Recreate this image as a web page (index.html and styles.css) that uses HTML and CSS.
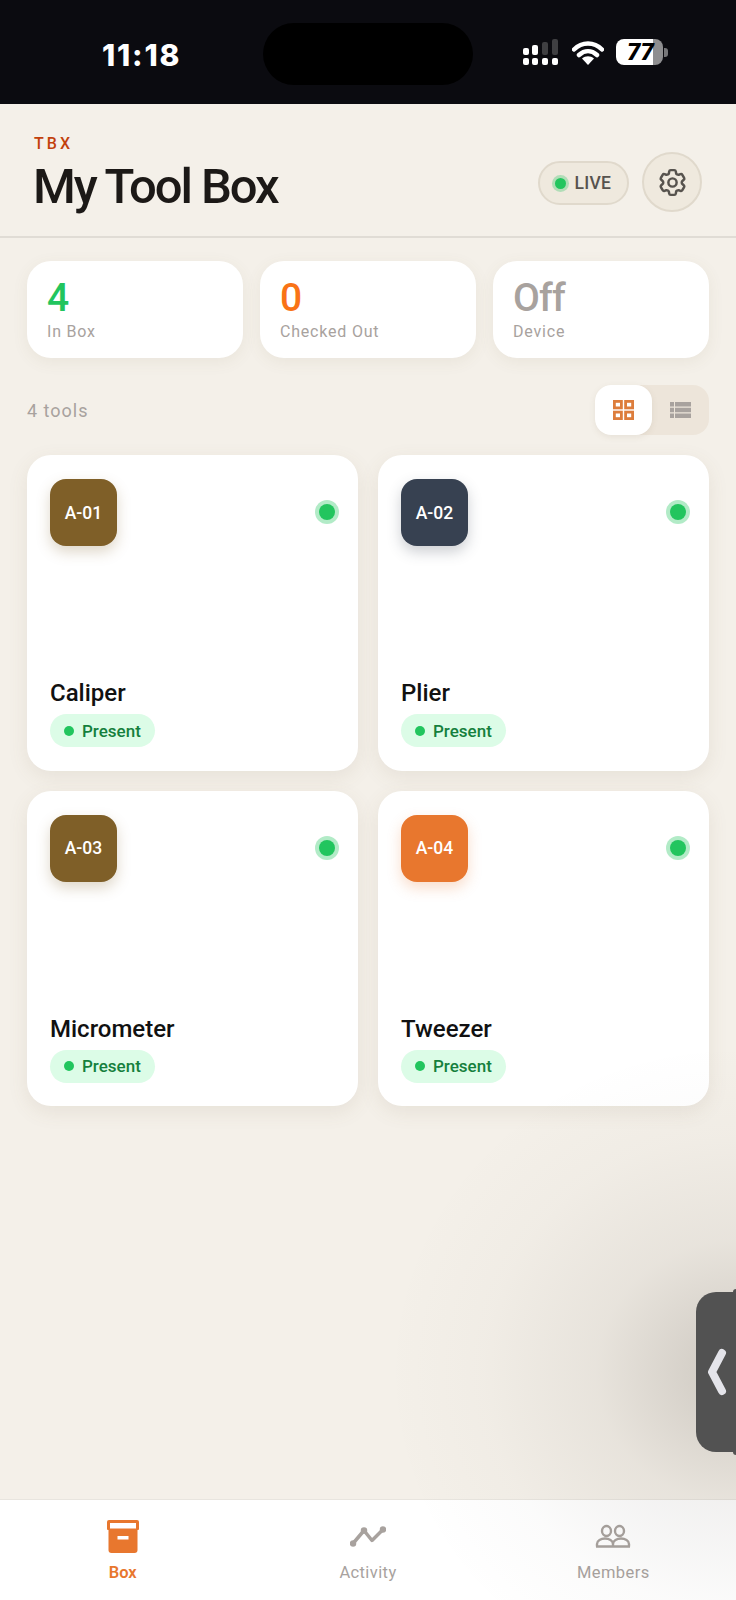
FILE: index.html
```html
<!DOCTYPE html>
<html lang="en">
<head>
    <meta charset="UTF-8">
    <meta name="viewport" content="width=device-width, initial-scale=1.0">
    <title>My Tool Box</title>
    <link rel="stylesheet" href="styles.css">
</head>
<body>
    <div class="phone">
        <div class="status-bar">
            <span class="clock">11:18</span>
            <div class="island"></div>
            <div class="status-icons">
                <svg class="signal" width="38" height="26" viewBox="0 0 38 26">
                    <rect x="1" y="9" width="6" height="7" rx="2" fill="#fff"/>
                    <rect x="10" y="6" width="6" height="10" rx="2" fill="#fff"/>
                    <rect x="20" y="3" width="6" height="13" rx="2" fill="#3f3f42"/>
                    <rect x="30" y="0" width="6" height="16" rx="2" fill="#3f3f42"/>
                    <rect x="1" y="19" width="6" height="7" rx="2" fill="#fff"/>
                    <rect x="10" y="19" width="6" height="7" rx="2" fill="#fff"/>
                    <rect x="20" y="19" width="6" height="7" rx="2" fill="#fff"/>
                    <rect x="30" y="19" width="6" height="7" rx="2" fill="#fff"/>
                </svg>
                <svg class="wifi" width="32" height="25" viewBox="0 0 32 25">
                    <path d="M2 9.500C10 1.500 22 1.500 30 9.500M7 15C12.500 10 19.500 10 25 15" fill="none" stroke="#fff" stroke-width="4.500" stroke-linecap="round"/>
                    <path d="M16 25L10 18.500C13.500 15.500 18.500 15.500 22 18.500Z" fill="#fff"/>
                </svg>
                <div class="battery">
                    <div class="battery-body"><span class="battery-num">77</span></div>
                    <div class="battery-nub"></div>
                </div>
            </div>
        </div>

        <header class="top-header">
            <div>
                <div class="eyebrow">TBX</div>
                <h1>My Tool Box</h1>
            </div>
            <div class="header-actions">
                <div class="live-pill"><span class="live-dot"></span>LIVE</div>
                <div class="gear-btn">
                    <svg width="33" height="33" viewBox="0 0 24 24" fill="none" stroke="#57534e" stroke-width="1.800" stroke-linejoin="round">
                        <path d="M9.594 3.94c.09-.542.56-.94 1.11-.94h2.593c.55 0 1.02.398 1.11.94l.213 1.281c.063.374.313.686.645.87.074.04.147.083.22.127.325.196.72.257 1.075.124l1.217-.456a1.125 1.125 0 0 1 1.37.49l1.296 2.247a1.125 1.125 0 0 1-.26 1.431l-1.003.827c-.293.241-.438.613-.43.992a7.723 7.723 0 0 1 0 .255c-.008.378.137.75.43.991l1.004.827c.424.35.534.955.26 1.43l-1.298 2.247a1.125 1.125 0 0 1-1.369.491l-1.217-.456c-.355-.133-.75-.072-1.076.124a6.47 6.47 0 0 1-.22.128c-.331.183-.581.495-.644.869l-.213 1.281c-.09.543-.56.94-1.11.94h-2.594c-.55 0-1.019-.398-1.11-.94l-.213-1.281c-.062-.374-.312-.686-.644-.87a6.52 6.52 0 0 1-.22-.127c-.325-.196-.72-.257-1.076-.124l-1.217.456a1.125 1.125 0 0 1-1.369-.49l-1.297-2.247a1.125 1.125 0 0 1 .26-1.431l1.004-.827c.292-.24.437-.613.43-.991a6.932 6.932 0 0 1 0-.255c.007-.38-.138-.751-.43-.992l-1.004-.827a1.125 1.125 0 0 1-.26-1.43l1.297-2.247a1.125 1.125 0 0 1 1.37-.491l1.216.456c.356.133.751.072 1.076-.124.072-.044.146-.086.22-.128.332-.183.582-.495.644-.869l.214-1.28Z"/>
                        <circle cx="12" cy="12" r="3"/>
                    </svg>
                </div>
            </div>
        </header>

        <main class="content">
            <div class="stats">
                <div class="stat-card">
                    <div class="stat-value green">4</div>
                    <div class="stat-label">In Box</div>
                </div>
                <div class="stat-card">
                    <div class="stat-value orange">0</div>
                    <div class="stat-label">Checked Out</div>
                </div>
                <div class="stat-card">
                    <div class="stat-value grey">Off</div>
                    <div class="stat-label">Device</div>
                </div>
            </div>

            <div class="toolbar">
                <span class="tool-count">4 tools</span>
                <div class="view-toggle">
                    <div class="toggle-btn active">
                        <svg width="21" height="20" viewBox="0 0 21 20" fill="none" stroke="#dd7d3c" stroke-width="2.800">
                            <rect x="1.400" y="1.400" width="7" height="6.500"/>
                            <rect x="12.600" y="1.400" width="7" height="6.500"/>
                            <rect x="1.400" y="12.100" width="7" height="6.500"/>
                            <rect x="12.600" y="12.100" width="7" height="6.500"/>
                        </svg>
                    </div>
                    <div class="toggle-btn">
                        <svg width="21" height="16" viewBox="0 0 21 16" fill="#a8a29e">
                            <rect x="0" y="0" width="4" height="4.500"/>
                            <rect x="5" y="0" width="16" height="4.500"/>
                            <rect x="0" y="5.750" width="4" height="4.500"/>
                            <rect x="5" y="5.750" width="16" height="4.500"/>
                            <rect x="0" y="11.500" width="4" height="4.500"/>
                            <rect x="5" y="11.500" width="16" height="4.500"/>
                        </svg>
                    </div>
                </div>
            </div>

            <div class="tool-grid">
                <div class="tool-card">
                    <div class="tool-top">
                        <div class="tool-badge brown">A-01</div>
                        <span class="tool-dot"></span>
                    </div>
                    <div class="tool-name">Caliper</div>
                    <div class="present-pill"><span class="pill-dot"></span>Present</div>
                </div>
                <div class="tool-card">
                    <div class="tool-top">
                        <div class="tool-badge slate">A-02</div>
                        <span class="tool-dot"></span>
                    </div>
                    <div class="tool-name">Plier</div>
                    <div class="present-pill"><span class="pill-dot"></span>Present</div>
                </div>
                <div class="tool-card">
                    <div class="tool-top">
                        <div class="tool-badge brown">A-03</div>
                        <span class="tool-dot"></span>
                    </div>
                    <div class="tool-name">Micrometer</div>
                    <div class="present-pill"><span class="pill-dot"></span>Present</div>
                </div>
                <div class="tool-card">
                    <div class="tool-top">
                        <div class="tool-badge amber">A-04</div>
                        <span class="tool-dot"></span>
                    </div>
                    <div class="tool-name">Tweezer</div>
                    <div class="present-pill"><span class="pill-dot"></span>Present</div>
                </div>
            </div>
        </main>

        <nav class="bottom-nav">
            <div class="nav-item active">
                <svg width="32" height="33" viewBox="0 0 32 33">
                    <path d="M2 0H30A2 2 0 0 1 32 2V9A1 1 0 0 1 31 10H1A1 1 0 0 1 0 9V2A2 2 0 0 1 2 0Z" fill="#e8772e"/>
                    <rect x="3" y="3" width="26" height="5.500" fill="#fff"/>
                    <path d="M1.500 10H30.500V30A3 3 0 0 1 27.500 33H4.500A3 3 0 0 1 1.500 30Z" fill="#e8772e"/>
                    <rect x="10.500" y="16" width="11" height="3.500" fill="#fff"/>
                </svg>
                <span>Box</span>
            </div>
            <div class="nav-item">
                <svg width="36" height="33" viewBox="0 0 36 33" fill="none" stroke="#a8a29e" stroke-width="3.500" stroke-linecap="round" stroke-linejoin="round">
                    <path d="M3 23.500L14 10.500L22 20.500L33 9.500"/>
                    <circle cx="3" cy="23.500" r="1.500" fill="#a8a29e"/>
                    <circle cx="14" cy="10.500" r="1.500" fill="#a8a29e"/>
                    <circle cx="33" cy="9.500" r="1.500" fill="#a8a29e"/>
                </svg>
                <span>Activity</span>
            </div>
            <div class="nav-item">
                <svg width="36" height="33" viewBox="0 0 36 33" fill="none" stroke="#a8a29e" stroke-width="2.400">
                    <ellipse cx="11.500" cy="11" rx="4.500" ry="5"/>
                    <ellipse cx="24.500" cy="11" rx="4.500" ry="5"/>
                    <path d="M2 26.500V24C2 20.500 6 18.500 10 18.500C14 18.500 18 20.500 18 24V26.500M18 24C18 20.500 22 18.500 26 18.500C30 18.500 34 20.500 34 24V26.500M1 26.500H35"/>
                </svg>
                <span>Members</span>
            </div>
        </nav>

        <div class="side-glow"></div>
        <div class="side-handle">
            <svg width="20" height="48" viewBox="0 0 20 48" fill="none" stroke="#e4e4ea" stroke-width="8" stroke-linecap="round" stroke-linejoin="round">
                <path d="M15 5L5 24L15 43"/>
            </svg>
        </div>
    </div>
</body>
</html>
```

FILE: styles.css
```css
* {
    box-sizing: border-box;
}
body {
    margin: 0;
    font-family: Roboto, "Liberation Sans", sans-serif;
    background-color: #f4f0e9;
    color: #1c1917;
}
.phone {
    position: relative;
    display: flex;
    flex-direction: column;
    width: 736px;
    height: 1600px;
    overflow: hidden;
    background-color: #f4f0e9;
}

/* Status bar */
.status-bar {
    position: relative;
    display: flex;
    justify-content: space-between;
    align-items: center;
    height: 104px;
    padding: 0 68px 0 102px;
    background-color: #0b0b10;
    flex-shrink: 0;
}
.clock {
    padding-top: 5px;
    color: #fff;
    font-family: Inter, sans-serif;
    font-size: 30px;
    font-weight: 800;
    letter-spacing: 1.800px;
    line-height: 1;
}
.island {
    position: absolute;
    left: 263px;
    top: 23px;
    width: 210px;
    height: 62px;
    border-radius: 31px;
    background-color: #000;
}
.status-icons {
    display: flex;
    align-items: center;
    gap: 12px;
}
.battery {
    display: flex;
    align-items: center;
    gap: 1px;
}
.battery-body {
    display: flex;
    align-items: center;
    justify-content: center;
    width: 47px;
    height: 26px;
    padding-left: 2px;
    border-radius: 8px;
    background: linear-gradient(to right, #fff 78%, #8e8e90 78%);
}
.battery-num {
    color: #000;
    font-size: 24px;
    font-weight: 900;
    font-style: italic;
    line-height: 1;
}
.battery-nub {
    width: 4px;
    height: 9px;
    border-radius: 0 3px 3px 0;
    background-color: #77777a;
}

/* Header */
.top-header {
    display: flex;
    justify-content: space-between;
    height: 134px;
    padding: 32px 34px 0 34px;
    border-bottom: 2px solid #e0dcd5;
    flex-shrink: 0;
}
.eyebrow {
    color: #c2410c;
    font-size: 16px;
    font-weight: 500;
    letter-spacing: 3.1px;
    line-height: 16px;
}
h1 {
    margin: 8px 0 0 -1px;
    font-size: 49px;
    font-weight: 500;
    letter-spacing: -2.1px;
    line-height: 54px;
}
.header-actions {
    display: flex;
    align-items: flex-start;
    gap: 13px;
    padding-top: 16px;
}
.live-pill {
    display: flex;
    align-items: center;
    gap: 9px;
    height: 44px;
    margin-top: 9px;
    padding: 0 16px 0 15px;
    border: 2px solid #e0d9cc;
    border-radius: 22px;
    background-color: #efe9de;
    color: #57534e;
    font-size: 17.500px;
    font-weight: 500;
    letter-spacing: 0.2px;
}
.live-dot {
    width: 11px;
    height: 11px;
    border-radius: 50%;
    background-color: #22c55e;
    box-shadow: 0 0 0 3px rgba(34, 197, 94, 0.3);
}
.gear-btn {
    display: flex;
    align-items: center;
    justify-content: center;
    width: 60px;
    height: 60px;
    border: 2px solid #e0d9cc;
    border-radius: 50%;
    background-color: #efe9de;
}

/* Main content */
.content {
    flex: 1;
    padding: 23px 27px 0;
}
.stats {
    display: grid;
    grid-template-columns: repeat(3, 1fr);
    gap: 17px;
}
.stat-card {
    height: 97px;
    padding: 17px 20px 0;
    border-radius: 24px;
    background-color: #fff;
    box-shadow: 0 4px 16px rgba(120, 100, 70, 0.08);
}
.stat-value {
    font-size: 39px;
    font-weight: 500;
    letter-spacing: -0.8px;
    line-height: 40px;
}
.stat-value.green { color: #22c55e; }
.stat-value.orange { color: #f97316; }
.stat-value.grey { color: #a8a29e; }
.stat-label {
    margin-top: 4px;
    color: #a8a29e;
    font-size: 16px;
    letter-spacing: 0.8px;
    line-height: 20px;
}
.toolbar {
    display: flex;
    justify-content: space-between;
    align-items: center;
    margin-top: 27px;
}
.tool-count {
    color: #a8a29e;
    font-size: 18px;
    letter-spacing: 1px;
}
.view-toggle {
    display: flex;
    width: 114px;
    height: 50px;
    border-radius: 16px;
    background-color: #ede5da;
}
.toggle-btn {
    display: flex;
    align-items: center;
    justify-content: center;
    width: 57px;
    border-radius: 16px;
}
.toggle-btn.active {
    background-color: #fff;
    box-shadow: 0 2px 6px rgba(120, 100, 70, 0.1);
}
.tool-grid {
    display: grid;
    grid-template-columns: repeat(2, 1fr);
    gap: 20px;
    margin-top: 20px;
}
.tool-card {
    display: flex;
    flex-direction: column;
    height: 315.500px;
    padding: 24px 20px 23.500px 23px;
    border-radius: 24px;
    background-color: #fff;
    box-shadow: 0 6px 20px rgba(120, 100, 70, 0.1);
}
.tool-top {
    display: flex;
    justify-content: space-between;
    align-items: flex-start;
    flex: 1;
}
.tool-badge {
    display: flex;
    align-items: center;
    justify-content: center;
    width: 67px;
    height: 67px;
    border-radius: 16px;
    color: #fff;
    font-size: 17.500px;
    font-weight: 500;
}
.tool-badge.brown {
    background-color: #7f5f28;
    box-shadow: 0 6px 14px rgba(127, 95, 40, 0.25);
}
.tool-badge.slate {
    background-color: #374151;
    box-shadow: 0 6px 14px rgba(55, 65, 81, 0.25);
}
.tool-badge.amber {
    background-color: #e8772e;
    box-shadow: 0 6px 14px rgba(232, 119, 46, 0.25);
}
.tool-dot {
    width: 16px;
    height: 16px;
    margin: 25px 3px 0 0;
    border-radius: 50%;
    background-color: #22c55e;
    box-shadow: 0 0 0 4px rgba(34, 197, 94, 0.35);
}
.tool-name {
    color: #111;
    font-size: 24px;
    font-weight: 500;
    line-height: 28px;
}
.present-pill {
    display: flex;
    align-items: center;
    align-self: flex-start;
    gap: 8px;
    height: 33px;
    margin-top: 7px;
    padding: 0 14px;
    border-radius: 17px;
    background-color: #dcfce7;
    color: #15803d;
    font-size: 17px;
    font-weight: 500;
}
.pill-dot {
    width: 10px;
    height: 10px;
    border-radius: 50%;
    background-color: #22c55e;
}

/* Bottom navigation */
.bottom-nav {
    display: grid;
    grid-template-columns: repeat(3, 1fr);
    height: 101px;
    padding-top: 20px;
    background-color: #fff;
    border-top: 1px solid #e8e5df;
    flex-shrink: 0;
}
.nav-item {
    display: flex;
    flex-direction: column;
    align-items: center;
    gap: 10px;
    color: #a8a29e;
    font-size: 16.500px;
    letter-spacing: 0.4px;
}
.nav-item.active {
    color: #e8772e;
    font-weight: 600;
    letter-spacing: 0;
}

/* Floating side handle and the soft shadow around it */
.side-glow {
    position: absolute;
    right: 0;
    bottom: 0;
    width: 400px;
    height: 560px;
    background: radial-gradient(ellipse 350px 330px at 100% 332px,
        rgba(70, 60, 50, 0.22) 0%,
        rgba(70, 60, 50, 0.16) 16%,
        rgba(70, 60, 50, 0.07) 40%,
        rgba(70, 60, 50, 0.02) 72%,
        rgba(70, 60, 50, 0) 100%);
    pointer-events: none;
}
.side-handle {
    position: absolute;
    top: 1292px;
    right: -20px;
    display: flex;
    align-items: center;
    width: 60px;
    height: 160px;
    padding-left: 11px;
    border-radius: 20px;
    background-color: #525252;
}
.side-handle::after {
    content: "";
    position: absolute;
    left: 37px;
    top: -3px;
    bottom: -3px;
    width: 23px;
    border-radius: 3px;
    background-color: #525252;
}
```
